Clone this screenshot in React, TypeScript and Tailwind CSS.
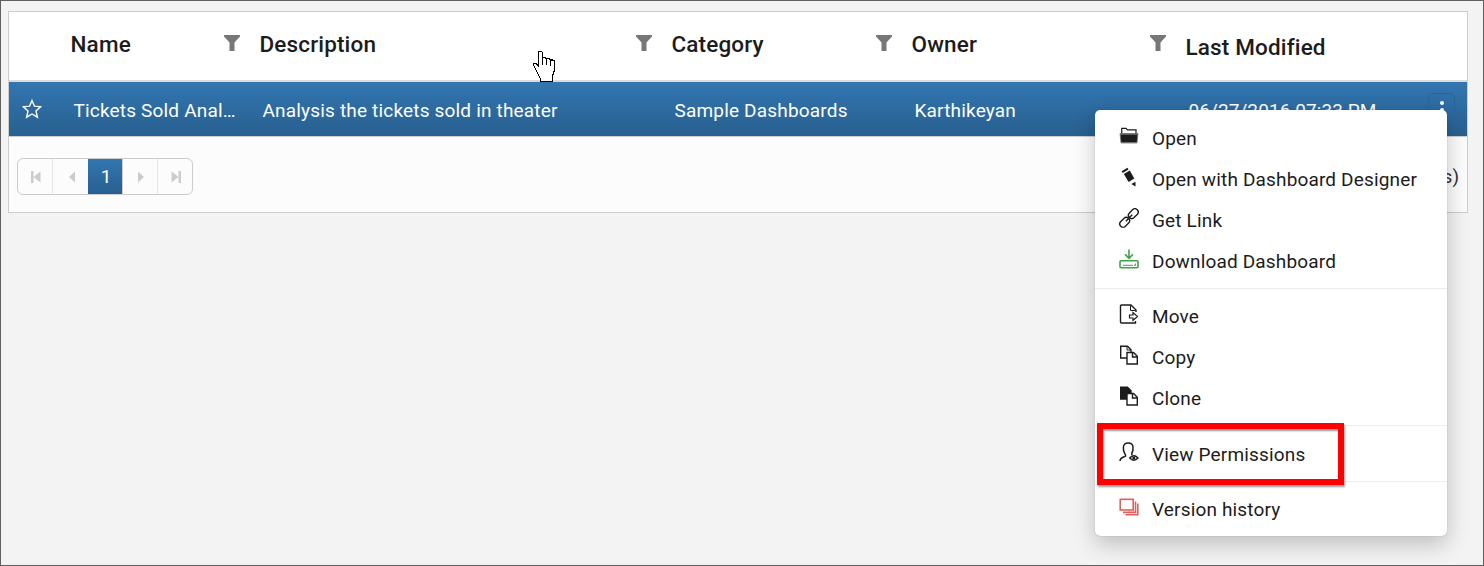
import React from "react";

const ink = "#1c1c1c";

function Filter() {
  return (
    <svg width="16" height="16" viewBox="0 0 16 16" className="shrink-0">
      <path d="M0 0H16V1.500L10.500 7.500V16H5.500V7.500L0 1.500Z" fill="#777" />
    </svg>
  );
}

function OpenIcon() {
  return (
    <svg width="20" height="20" viewBox="0 0 20 20" fill="none">
      <path d="M2.700 8V2.300H7L8.500 3.800H17V8" stroke={ink} strokeWidth="1.200" />
      <path d="M1 7.500H19L18 17H2Z" fill={ink} stroke="#777" strokeWidth="0.800" />
      <path d="M1 8.300H19M2 16.500H18" stroke="#777" strokeWidth="0.900" />
    </svg>
  );
}

function PencilIcon() {
  return (
    <svg width="20" height="20" viewBox="0 0 20 20" fill={ink}>
      <path d="M2.700 4.300L8.500 0.800L9.500 2.600L3.700 6Z" />
      <path d="M4.800 7L10.800 3.500L15.300 11.500L9.600 14.900Z" />
      <path d="M12.300 17L16.500 14.800L16.500 19.400Z" />
    </svg>
  );
}

function LinkIcon() {
  return (
    <svg width="20" height="20" viewBox="0 0 20 20" fill="none" stroke={ink} strokeWidth="1.400">
      <g transform="rotate(-45 10 10)">
        <rect x="-1.600" y="6.700" width="11" height="6.600" rx="3.300" />
        <rect x="10.600" y="6.700" width="11" height="6.600" rx="3.300" />
        <path d="M5.500 10H14.500" />
      </g>
    </svg>
  );
}

function DownloadIcon() {
  return (
    <svg width="20" height="20" viewBox="0 0 20 20" fill="none" stroke="#3fa14b" strokeWidth="1.600">
      <path d="M10 0.500V9M6 5.300L10 9.300L14 5.300" />
      <rect x="1" y="11.700" width="18" height="7" rx="1" />
      <path d="M4 16.300H14" strokeWidth="1" />
      <path d="M15 16.300H16.500V14.500" strokeWidth="1" />
    </svg>
  );
}

function MoveIcon() {
  return (
    <svg width="20" height="20" viewBox="0 0 20 20" fill="none" stroke={ink} strokeWidth="1.400">
      <path d="M17 8V6L12 1H2.500Q1.500 1 1.500 2V18Q1.500 19 2.500 19H16.500V17" />
      <path d="M11.500 1.500V6.500H16.500" strokeWidth="1" />
      <path d="M10.500 11H14V8.500L18.500 12.500L14 16.500V14H10.500Z" fill="white" strokeWidth="1.200" />
    </svg>
  );
}

function CopyIcon({ filled = false }: { filled?: boolean }) {
  return (
    <svg width="20" height="20" viewBox="0 0 20 20" fill="none" stroke={ink} strokeWidth="1.400">
      <path d="M1.700 1.200H8.500L12 4.700V13H1.700Z" fill={filled ? ink : "none"} />
      <path d="M8 1.500V5H12" strokeWidth="1" />
      <path d="M8 7.500H14.500L18.300 11.300V19H8Z" fill="white" />
      <path d="M13.500 7.700V12H18" />
    </svg>
  );
}

function PermissionIcon() {
  return (
    <svg width="20" height="20" viewBox="0 0 20 20" fill="none" stroke={ink} strokeWidth="1.500">
      <path d="M1 19C1.200 16.500 2 16 4 15.200L6.500 14.200C7 13.500 6.500 12.800 5.800 11.600C4.300 9.500 4.200 7 4.400 5C4.700 2.400 6.600 1 9.200 1C11.800 1 13.800 2.500 14 5C14.200 7.500 14 9.500 12.800 11.500V13" />
      <path d="M10.700 16Q14.800 11.500 19 16Q14.800 20.500 10.700 16Z" strokeWidth="1.400" />
      <circle cx="14.850" cy="16" r="1.600" fill={ink} stroke="none" />
    </svg>
  );
}

function HistoryIcon() {
  return (
    <svg width="20" height="20" viewBox="0 0 20 20" fill="none" stroke="#e06060" strokeWidth="1.600">
      <rect x="1.200" y="2.300" width="13" height="10.700" />
      <path d="M16.500 4.500V15.400H4" />
      <path d="M18.800 6.500V17.700H6.500" />
    </svg>
  );
}

function MenuItem({ icon, label }: { icon: React.ReactNode; label: string }) {
  return (
    <li className="flex h-[41px] items-center pl-[23.5px]">
      <span className="-mt-[6px] mr-[13.5px] shrink-0">{icon}</span>
      <span className="whitespace-nowrap">{label}</span>
    </li>
  );
}

function ContextMenu() {
  return (
    <ul className="absolute top-[109px] left-[1094px] h-[426px] w-[352px] rounded-[5px] bg-white pt-[8px] text-[19px] tracking-[0.160px] text-[#1c1c1c] shadow-[0_8px_22px_rgba(0,0,0,0.22),0_0_1px_rgba(0,0,0,0.4)]">
      <MenuItem icon={<OpenIcon />} label="Open" />
      <MenuItem icon={<PencilIcon />} label="Open with Dashboard Designer" />
      <MenuItem icon={<LinkIcon />} label="Get Link" />
      <MenuItem icon={<DownloadIcon />} label="Download Dashboard" />
      <li className="mt-[6px] mb-[7px] h-px bg-[#ebebeb]" />
      <MenuItem icon={<MoveIcon />} label="Move" />
      <MenuItem icon={<CopyIcon />} label="Copy" />
      <MenuItem icon={<CopyIcon filled />} label="Clone" />
      <li className="mt-[6px] mb-[8px] h-px bg-[#ebebeb]" />
      <MenuItem icon={<PermissionIcon />} label="View Permissions" />
      <li className="mt-[6px] mb-[7px] h-px bg-[#ebebeb]" />
      <MenuItem icon={<HistoryIcon />} label="Version history" />
    </ul>
  );
}

const columns = "grid grid-cols-[49.500px_189px_412px_240px_274px_1fr]";

function HeaderCell({ label }: { label: string }) {
  return (
    <div className="flex items-center justify-between pr-2 pl-3">
      <span>{label}</span>
      <span className="-mt-[3px] flex"><Filter /></span>
    </div>
  );
}

function Pager() {
  return (
    <div className="flex h-[37px] w-[176px] overflow-hidden rounded-[6px] border border-[#ccc] text-[#ccc]">
      <span className="flex w-[35px] items-center justify-center border-r border-[#e6e6e6] pl-[1px]">
        <svg width="12" height="12" viewBox="0 0 12 12" fill="currentColor"><path d="M1 0H3.500V12H1ZM10.500 0.500V11.500L3.500 6Z" /></svg>
      </span>
      <span className="flex w-[35px] items-center justify-center pl-[2px]">
        <svg width="8" height="12" viewBox="0 0 8 12" fill="currentColor"><path d="M7 0.500V11.500L1 6Z" /></svg>
      </span>
      <span className="flex w-[35px] items-center justify-center border-r border-[#ccc] bg-linear-to-b from-[#3276b1] to-[#285f8f] pl-[2px] text-[19px] text-white">1</span>
      <span className="flex w-[35px] items-center justify-center border-r border-[#e6e6e6] pl-0.5">
        <svg width="8" height="12" viewBox="0 0 8 12" fill="currentColor"><path d="M1 0.500V11.500L7 6Z" /></svg>
      </span>
      <span className="flex w-[34px] items-center justify-center pl-[2px]">
        <svg width="12" height="12" viewBox="0 0 12 12" fill="currentColor"><path d="M8.500 0H11V12H8.500ZM1.500 0.500V11.500L8.500 6Z" /></svg>
      </span>
    </div>
  );
}

function HandCursor() {
  return (
    <svg className="absolute top-[49px] left-[531px]" width="24" height="33" viewBox="0 0 24 33" fill="white" stroke="black" strokeWidth="1.200" shapeRendering="crispEdges">
      <path d="M8.500 31.500V29L5.500 23L1.500 15V13.500H4L6.500 16.500V3Q6.500 1.500 8.200 1.500Q10.500 1.500 10.500 3V8Q14 7 14.500 9Q18 8 18.500 10Q22.500 9.500 22.500 12V20L20.500 26V31.500Z" />
      <path d="M10.500 7V14.500M14.500 9V15M18.500 10V15.500" fill="none" />
    </svg>
  );
}

export default function App() {
  return (
    <div className="relative h-[566px] w-[1484px] overflow-hidden border border-[#606060] bg-[#f3f3f3] pt-[10px] pl-[7px] font-['Roboto',sans-serif] leading-none">
      <div className="flex h-[202px] w-[1460px] flex-col border border-[#ccc] bg-[#fcfcfc]">
        <div className={`${columns} h-[70px] shrink-0 border-b-2 border-[#dcdcdc] bg-white pb-[4px] text-[22.500px] font-medium tracking-[0.150px] text-[#1c1c1c]`}>
          <div />
          <HeaderCell label="Name" />
          <HeaderCell label="Description" />
          <HeaderCell label="Category" />
          <HeaderCell label="Owner" />
          <div className="flex items-center pt-[6px] pl-3">Last Modified</div>
        </div>
        <div className={`${columns} h-[55px] shrink-0 items-center border-b border-[#ccc] bg-linear-to-b from-[#3276b1] to-[#285f8f] text-[19px] tracking-[0.180px] text-white`}>
          <svg className="-mt-px ml-[13px]" width="20" height="20" viewBox="0 0 20 20" fill="none" stroke="white" strokeWidth="1.400">
            <path d="M10 1.500L12.500 7.200L18.700 7.800L14 11.900L15.400 18.200L10 15L4.600 18.200L6 11.900L1.300 7.800L7.500 7.200Z" />
          </svg>
          <span className="pt-[3px] pl-[15px] whitespace-nowrap">Tickets Sold Anal…</span>
          <span className="pt-[3px] pl-[15px]">Analysis the tickets sold in theater</span>
          <span className="pt-[3px] pl-[15px]">Sample Dashboards</span>
          <span className="pt-[3px] pl-[15px]">Karthikeyan</span>
          <div className="flex h-full items-center justify-between pr-[11px] pl-[15px]">
            <span className="pt-[3px] tracking-[0.080px]">06/27/2016 07:33 PM</span>
            <div className="mt-[4px] mr-px flex h-[37px] w-[27px] flex-col items-center gap-[3px] rounded-[6px] border border-[#2b6599] pt-[7px]">
              <span className="h-1 w-1 rounded-full bg-white" />
              <span className="h-1 w-1 rounded-full bg-white" />
              <span className="h-1 w-1 rounded-full bg-white" />
            </div>
          </div>
        </div>
        <div className="flex flex-1 items-center justify-between pr-[8px] pl-[8px]">
          <div className="mb-[-3px] self-start pt-[21px]"><Pager /></div>
          <span className="mb-[-4px] text-[19px] text-[#333]">s)</span>
        </div>
      </div>
      <HandCursor />
      <ContextMenu />
      <div className="absolute top-[422px] left-[1096px] h-[62px] w-[247px] border-[6px] border-[#fe0000] shadow-[1px_2px_2px_rgba(0,0,0,0.4),inset_1px_2px_2px_rgba(0,0,0,0.4)]" />
    </div>
  );
}
